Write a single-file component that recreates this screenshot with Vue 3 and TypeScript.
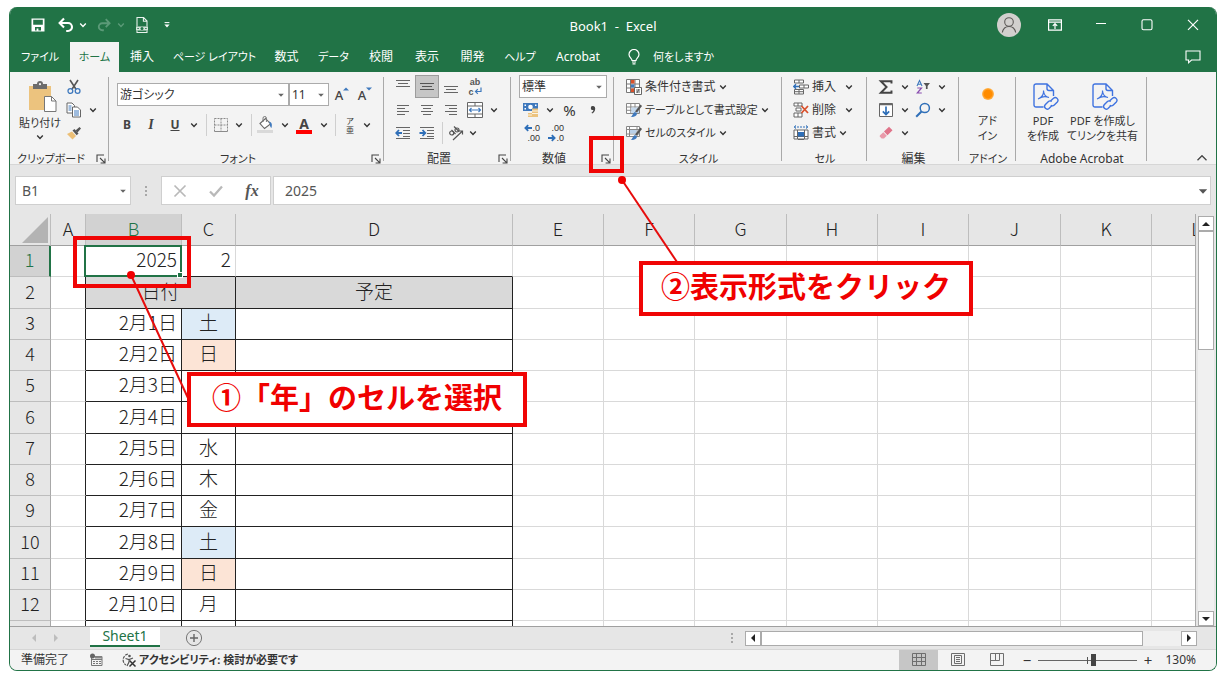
<script setup lang="ts">
import { ref } from 'vue'

interface Day {
  date: string
  dow: string
  kind?: 'sat' | 'sun'
}

const columns: string[] = ['A', 'B', 'C', 'D', 'E', 'F', 'G', 'H', 'I', 'J', 'K', 'L']
const emptyColumns = columns.slice(4)

const days: Day[] = [
  { date: '2月1日', dow: '土', kind: 'sat' },
  { date: '2月2日', dow: '日', kind: 'sun' },
  { date: '2月3日', dow: '' },
  { date: '2月4日', dow: '' },
  { date: '2月5日', dow: '水' },
  { date: '2月6日', dow: '木' },
  { date: '2月7日', dow: '金' },
  { date: '2月8日', dow: '土', kind: 'sat' },
  { date: '2月9日', dow: '日', kind: 'sun' },
  { date: '2月10日', dow: '月' },
]

const tabs: string[] = [
  'ファイル', 'ホーム', '挿入', 'ページ レイアウト', '数式', 'データ',
  '校閲', '表示', '開発', 'ヘルプ', 'Acrobat',
]
const kana = /[ァ-ヶ]/
const activeTab = ref('ホーム')

const styleCommands = [
  { icon: 'i-cond', label: '条件付き書式' },
  { icon: 'i-table', label: 'テーブルとして書式設定' },
  { icon: 'i-cellstyle', label: 'セルのスタイル' },
]
const cellCommands = [
  { icon: 'i-insert', label: '挿入', wide: true },
  { icon: 'i-delete', label: '削除', wide: true },
  { icon: 'i-format', label: '書式', wide: false },
]

const cellName = ref('B1')
const formula = ref('2025')
const zoom = ref(56)
</script>

<template>
  <svg class="sprite" aria-hidden="true">
    <symbol id="chev" viewBox="0 0 8 8"><path d="M1.2 2.6 4 5.4 6.8 2.6" fill="none" stroke="currentColor" stroke-width="1.4" /></symbol>
    <symbol id="caret" viewBox="0 0 8 8"><path d="M1.2 2.8h5.6L4 5.8z" fill="currentColor" /></symbol>
    <symbol id="launch" viewBox="0 0 10 10"><path d="M1 8V1h7M4 4l4.6 4.6M9 4.6V9H4.6" fill="none" stroke="#444" stroke-width="1.1" /></symbol>

    <symbol id="i-save" viewBox="0 0 16 16"><path fill="#fff" fill-rule="evenodd" d="M1.5 1.5h13v13h-13zM3.2 2.7v5h9.6v-5zM5 10v3.4h1.6V11.6h1.8v1.8H11V10z" /></symbol>
    <symbol id="i-undo" viewBox="0 0 16 16"><path d="M1.6 6H10a3.9 3.9 0 0 1 0 8H8.2M6 1.4 1.6 6 6 10.4" fill="none" stroke="currentColor" stroke-width="2.1" /></symbol>
    <symbol id="i-print" viewBox="0 0 16 18"><path d="M3 10.5V1.5h6.6L13 5v5.5M9.4 1.6v3.6H13M3 14.5v2h10v-2" fill="none" stroke="#e8f1ec" stroke-width="1.1" /><path d="M2 10.6h12v3.8H2z" fill="#d3e4da" /><circle cx="8" cy="12.5" r="1.5" fill="#217346" /><path d="M3.4 12h1.4v1H3.4zM11.2 12h1.4v1h-1.4z" fill="#217346" /></symbol>
    <symbol id="i-more" viewBox="0 0 8 8"><path d="M1.6 1.6h4.8" stroke="#fff" /><path d="M1.4 3.6h5.2L4 6.4z" fill="#fff" /></symbol>
    <symbol id="i-user" viewBox="0 0 24 24"><circle cx="12" cy="12" r="12" fill="#d2d0ce" /><circle cx="12" cy="9" r="4.3" fill="none" stroke="#5d5a58" stroke-width="1.1" /><path d="M5.3 19.5c.8-4 3.4-6 6.7-6s5.9 2 6.7 6" fill="none" stroke="#5d5a58" stroke-width="1.1" /></symbol>
    <symbol id="i-ribbon" viewBox="0 0 14 12"><path d="M.6.8h12.8v10.4H.6zM.6 3.2h12.8M7 10V5M4.8 6.8 7 4.6l2.2 2.2" fill="none" stroke="#fff" stroke-width="1.2" /></symbol>
    <symbol id="i-min" viewBox="0 0 12 12"><path d="M1 4.5h10" stroke="#fff" stroke-width="1.2" /></symbol>
    <symbol id="i-max" viewBox="0 0 12 12"><rect x="1" y="0.8" width="10" height="10" rx="1.5" fill="none" stroke="#fff" stroke-width="1.1" /></symbol>
    <symbol id="i-close" viewBox="0 0 12 12"><path d="m1 .8 10 10M11 .8 1 10.8" stroke="#fff" stroke-width="1.2" /></symbol>
    <symbol id="i-bulb" viewBox="0 0 12 16"><path d="M4 11.500C4 9.500 1 8.600 1 5.500a5 5 0 0 1 10 0c0 3.100-3 4-3 6zM4 13h4M4.500 14.800h3" fill="none" stroke="#fff" stroke-width="1.2" /></symbol>
    <symbol id="i-comment" viewBox="0 0 16 14"><path d="M1 1h14v9H6.500L3.600 12.800V10H1z" fill="none" stroke="#fff" stroke-width="1.1" /></symbol>

    <symbol id="i-paste" viewBox="0 0 28 32"><path d="M0 5h22v24H0z" fill="#ecc37e" /><path d="M4 3h4a3 3 0 0 1 6 0h4v5H4z" fill="#6c6c6c" /><circle cx="11" cy="3.2" r="1.1" fill="#f3f3f3" /><path d="M15.500 15.500h7l4.500 4.500v10.500H15.500z" fill="#fff" stroke="#777" /><path d="M22.500 15.500V20H27" fill="none" stroke="#777" /></symbol>
    <symbol id="i-cut" viewBox="0 0 14 16"><path d="M3 1 9.200 10.500M11 1 4.800 10.500" stroke="#555" stroke-width="1.6" /><circle cx="3.4" cy="12" r="2.4" fill="none" stroke="#3f79bd" stroke-width="1.3" /><circle cx="10.6" cy="12" r="2.4" fill="none" stroke="#3f79bd" stroke-width="1.3" /></symbol>
    <symbol id="i-copy" viewBox="0 0 16 16"><path d="M1 1h5l2.500 2.500V11H1z" fill="#fff" stroke="#666" /><path d="M6.500 5h5L14.500 8v7h-8z" fill="#fff" stroke="#666" /><path d="M8 9h5M8 11h5M8 13h5M2.500 4h3M2.500 6h3M2.500 8h3" stroke="#3f79bd" /></symbol>
    <symbol id="i-brush" viewBox="0 0 16 14"><path d="M1 8l5-2.500 4 4.500L6.500 13.500z" fill="#ecbf76" /><path d="m6.500 4.500 2-1.500 4 4.500-1.800 1.700z" fill="#555" /><path d="m9.500 4.500 4-3.500 1.500 1.500-3.500 4z" fill="#555" /></symbol>
    <symbol id="i-borders" viewBox="0 0 14 14"><path d="M.5.5h13v13H.5zM7 .5v13M.5 7h13" fill="none" stroke="#8a8a8a" stroke-dasharray="2 1" /><path d="M.5 13.500h13" stroke="#8a8a8a" /></symbol>
    <symbol id="i-fill" viewBox="0 0 18 18"><path d="M0 14h16v3H0z" fill="#d9d9d9" /><path d="m3 7.500 5.500-5 5 5.500-6 4.500z" fill="#fff" stroke="#666" stroke-width="1.1" /><path d="M6 6V2.200a1.700 1.700 0 0 1 3.400 0V6" fill="none" stroke="#777" /><path d="M12 5.500c2.500.5 3.500 2.500 2.500 6.500-1.300-1-1.800-2.300-1.500-4z" fill="#3f79bd" /></symbol>
    <symbol id="i-valign-t" viewBox="0 0 16 16"><path d="M1 1.500h14M3 4.500h10M1 7.500h14" stroke="#666" /></symbol>
    <symbol id="i-valign-m" viewBox="0 0 16 16"><path d="M1 4.500h14M3 7.500h10M1 10.500h14" stroke="#555" /></symbol>
    <symbol id="i-valign-b" viewBox="0 0 16 16"><path d="M1 7.500h14M3 10.500h10M1 13.500h14" stroke="#666" /></symbol>
    <symbol id="i-left" viewBox="0 0 16 16"><path d="M2 3.500h12M2 6.500h8M2 9.500h12M2 12.500h8" stroke="#666" /></symbol>
    <symbol id="i-center" viewBox="0 0 16 16"><path d="M2 3.500h12M4 6.500h8M2 9.500h12M4 12.500h8" stroke="#666" /></symbol>
    <symbol id="i-right" viewBox="0 0 16 16"><path d="M2 3.500h12M6 6.500h8M2 9.500h12M6 12.500h8" stroke="#666" /></symbol>
    <symbol id="i-wrap" viewBox="0 0 8 8"><path d="M7 .5V4.500H1.500M3.800 2.200 1.500 4.500l2.300 2.300" fill="none" stroke="#3f79bd" stroke-width="1.2" /></symbol>
    <symbol id="i-merge" viewBox="0 0 16 16"><path d="M.5.5h15v15H.5zM.5 4h15M.5 12h15M8 .5V4M8 12v3.500" fill="#fff" stroke="#666" /><path d="M2.500 8h11M4.500 6 2.500 8l2 2M11.500 6l2 2-2 2" fill="none" stroke="#3f79bd" stroke-width="1.2" /></symbol>
    <symbol id="i-outdent" viewBox="0 0 16 16"><path d="M1 2.500h14M8 5.500h7M8 8.500h7M8 11.500h7M1 13.500h14" stroke="#666" /><path d="M7 8H1.500M4 5 1.200 8 4 11" fill="none" stroke="#2f6fb8" stroke-width="1.8" /></symbol>
    <symbol id="i-indent" viewBox="0 0 16 16"><path d="M1 2.500h14M8 5.500h7M8 8.500h7M8 11.500h7M1 13.500h14" stroke="#666" /><path d="M.5 8H6M3.500 5 6.300 8l-2.800 3" fill="none" stroke="#2f6fb8" stroke-width="1.8" /></symbol>
    <symbol id="i-orient" viewBox="0 0 16 16"><g fill="none" stroke="#555" stroke-width="1.2"><circle cx="3.7" cy="8" r="2" /><path d="m3.500 5 4 4M6 1.500l5 5" /><circle cx="9" cy="5" r="2" /><path d="M5 15 14.500 6M11 6h3.500v3.500" /></g></symbol>
    <symbol id="i-money" viewBox="0 0 16 16"><path d="M0 1h15v8H0z" fill="#3f79bd" /><circle cx="7.5" cy="5" r="2.3" fill="#fff" /><path d="M1.500 2.500H3v1.500H1.500zM12 2.500h1.500V4H12zM1.500 6H3v1.500H1.500z" fill="#fff" /><path d="M9 6.500h6v8.500H9zM5 11h5v4H5z" fill="#ecc37e" /><path d="M9 9h6M9 11.500h6M5 13h4" stroke="#fff" stroke-width=".8" /></symbol>
    <symbol id="i-comma" viewBox="0 0 8 12"><path d="M4 2a2 2 0 1 0 .4 3.900C4.200 7.200 3.500 8 2.500 8.600l.6.900C5 8.600 6.200 7 6.200 4.500 6.200 3 5.300 2 4 2z" fill="#444" /></symbol>
    <symbol id="i-arrow-l" viewBox="0 0 8 8"><path d="M8 4H2M4.200 1.200 1.400 4l2.800 2.800" fill="none" stroke="#2f6fb8" stroke-width="1.8" /></symbol>
    <symbol id="i-arrow-r" viewBox="0 0 8 8"><path d="M0 4h6M3.800 1.200 6.600 4 3.800 6.800" fill="none" stroke="#2f6fb8" stroke-width="1.8" /></symbol>
    <symbol id="i-cond" viewBox="0 0 16 16"><path d="M.5.5h13v13H.5zM.5 5h13M.5 9h13M4.500.5v13M9 .5v13" fill="#fff" stroke="#777" /><path d="M5 1h3.500v3.500H5zM5 9.500h3.500V13H5z" fill="#d9512c" /><path d="M5 5.500h3.500v3H5z" fill="#3f79bd" /><path d="M8.500 8.500h7v7h-7z" fill="#fff" stroke="#666" /><path d="M10 11h4M10 13h4M13 10l-2 4" stroke="#555" stroke-width=".9" /></symbol>
    <symbol id="i-table" viewBox="0 0 16 16"><path d="M.5 1.500h13v10H.5zM.5 5h13M.5 8.300h13M4.800 1.500v10M9 1.500v10" fill="#fff" stroke="#888" /><path d="M5.300 5.500H13V11H5.300z" fill="#c5d9ee" /><path d="m9 9.500 5.500-7L16 4l-5 6.500z" fill="#555" /><path d="M4.500 15c2-.5 2-4 4.500-5l2 1.500c0 2.500-3 4-6.500 3.500z" fill="#3f79bd" /></symbol>
    <symbol id="i-cellstyle" viewBox="0 0 16 16"><path d="M.5 1.500h13v10H.5zM.5 4.500h13M.5 9h13M3.500 1.500v10M11 1.500v10" fill="#fff" stroke="#888" /><path d="M4 5h6.500v3.500H4z" fill="#b9d0e8" /><path d="m9 9.500 5.500-7L16 4l-5 6.500z" fill="#555" /><path d="M4.500 15c2-.5 2-4 4.500-5l2 1.500c0 2.500-3 4-6.500 3.500z" fill="#3f79bd" /></symbol>
    <symbol id="i-insert" viewBox="0 0 16 16"><path d="M1.500 1v3h9V1zM6 1v3M1.500 10.500v4.500h9v-4.500zM6 10.500V15M1.500 12.700h9" fill="#fff" stroke="#666" /><path d="M6.500 6h9v3h-9zM11 6v3" fill="#fff" stroke="#666" /><path d="M6 7.500H1M3 5.300.8 7.500 3 9.700" fill="none" stroke="#2f6fb8" stroke-width="1.4" /></symbol>
    <symbol id="i-delete" viewBox="0 0 16 16"><path d="M1 1v3h8V1zM5 1v3M1 11v4h8v-4zM5 11v4M3 6h5v3H3z" fill="#fff" stroke="#666" /><path d="m8.500 4 6.500 7M15 4l-6.500 7" stroke="#d9512c" stroke-width="1.8" /></symbol>
    <symbol id="i-format" viewBox="0 0 16 16"><path d="M1 2h14M3 .5 1 2l2 1.500M13 .5 15 2l-2 1.500" fill="none" stroke="#2f6fb8" stroke-dasharray="2 1" /><path d="M1 5h14v9H1zM4.500 5v9M11.500 5v9M1 11.500h14" fill="#fff" stroke="#666" /><path d="M5 7h6v4.500H5z" fill="#2f6fb8" /><path d="M5 14.500h6" stroke="#666" /></symbol>
    <symbol id="i-sum" viewBox="0 0 14 14"><path d="M11.800 4V2H2.500l5 5-5 5h9.300v-2" fill="none" stroke="#444" stroke-width="1.7" /></symbol>
    <symbol id="i-sort" viewBox="0 0 16 16"><path d="M2 7l2.500-5.500L7 7M3 5.300h3" fill="none" stroke="#3f79bd" stroke-width="1.1" /><path d="M2.300 9h4.200l-4.200 5h4.500" fill="none" stroke="#8a4fb0" stroke-width="1.2" /><path d="M8.500 4H15l-2.400 3v3h-1.700V7z" fill="#555" /></symbol>
    <symbol id="i-filldown" viewBox="0 0 14 14"><path d="M.5.5h13v13H.5z" fill="#fff" stroke="#666" /><path d="M.5 1.500h13" stroke="#666" stroke-width="1.5" /><path d="M7 3.500v8M3.800 8.300 7 11.500l3.200-3.200" fill="none" stroke="#2f6fb8" stroke-width="1.7" /></symbol>
    <symbol id="i-find" viewBox="0 0 16 16"><circle cx="9.800" cy="6" r="4.600" fill="none" stroke="#2f6fb8" stroke-width="1.5" /><path d="M6.500 9.500 1.200 14.800" stroke="#2f6fb8" stroke-width="2" /></symbol>
    <symbol id="i-erase" viewBox="0 0 14 14"><path d="M5 5.500 10 .8l3.500 3.500-5 5z" fill="#e0748a" /><path d="M4.300 6.200 7.800 9.700 5 12.500H2.600L.8 10.500v-1z" fill="#e99aaa" /></symbol>
    <symbol id="i-pdf" viewBox="0 0 26 28"><g fill="none" stroke="#3f73e0" stroke-width="1.4"><path d="M10.500 24H3a2 2 0 0 1-2-2V3a2 2 0 0 1 2-2h11l6.500 6.500V13M14 1v4.500a2 2 0 0 0 2 2h4.500" /><path d="M5 16c4-1.600 5.800-5 5.500-8.500M10.500 7.500c.3 4 2.500 6.500 5.500 7M6 15.500c3-2 6.500-2.500 10-1" stroke-width="1.1" /><path d="m17.500 18 3-2.800a2.700 2.700 0 0 1 3.800 3.800l-3 3a2.700 2.700 0 0 1-3.500.2" /><path d="m19 22.500-3 3a2.700 2.700 0 0 1-3.800-3.800l3-3a2.700 2.700 0 0 1 3.500-.2" /></g></symbol>
    <symbol id="i-collapse" viewBox="0 0 12 8"><path d="M1.500 6.200 6 1.700l4.500 4.500" fill="none" stroke="#444" stroke-width="1.3" /></symbol>
    <symbol id="i-dots" viewBox="0 0 4 12"><path d="M1 1h2v2H1zM1 5h2v2H1zM1 9h2v2H1z" fill="#a8a8a8" /></symbol>
    <symbol id="i-cancel" viewBox="0 0 14 14"><path d="m1.500 1.500 11 11M12.500 1.500l-11 11" stroke="#b9b9b9" stroke-width="1.700" /></symbol>
    <symbol id="i-enter" viewBox="0 0 14 14"><path d="m1 7.500 4 4 8-9" fill="none" stroke="#b9b9b9" stroke-width="2.300" /></symbol>
    <symbol id="i-corner" viewBox="0 0 26 26"><path d="M26 0v26H0z" fill="#b3b3b3" /></symbol>
    <symbol id="i-plus" viewBox="0 0 18 18"><circle cx="9" cy="9" r="7.600" fill="none" stroke="#777" /><path d="M9 5v8M5 9h8" stroke="#666" stroke-width="1.400" /></symbol>
    <symbol id="tri-l" viewBox="0 0 8 8"><path d="M6 0v8L2 4z" fill="currentColor" /></symbol>
    <symbol id="tri-r" viewBox="0 0 8 8"><path d="M2 0v8l4-4z" fill="currentColor" /></symbol>
    <symbol id="tri-u" viewBox="0 0 8 8"><path d="M0 6h8L4 2z" fill="currentColor" /></symbol>
    <symbol id="tri-d" viewBox="0 0 8 8"><path d="M0 2h8L4 6z" fill="currentColor" /></symbol>
    <symbol id="i-macro" viewBox="0 0 14 14"><path d="M2.500 3.500h10.500v9H2.500zM2.500 6.500H13" fill="none" stroke="#777" /><path d="M4 8.500h8M4 10.500h8" stroke="#777" stroke-dasharray="2 1" /><circle cx="3.500" cy="3" r="2.500" fill="#666" /><path d="M6 3.500h7v2H6z" fill="#888" /></symbol>
    <symbol id="i-access" viewBox="0 0 16 16"><path d="M7 2a6 6 0 0 0-2 11" fill="none" stroke="#555" stroke-width="1.200" stroke-dasharray="3 1" /><circle cx="8.500" cy="4" r="1.300" fill="#555" /><path d="M4.500 6.500 8 7.500l4-1.500M8 7.500V10l-2 4" fill="none" stroke="#555" stroke-width="1.200" /><path d="m8.500 8.500 6 6M14.500 8.500l-6 6" stroke="#333" stroke-width="1.500" /></symbol>
    <symbol id="i-normal" viewBox="0 0 14 14"><path d="M.5.5h13v12H.5zM.5 4.500h13M.5 8.500h13M4.500.5v12M9.500.5v12" fill="none" stroke="#6e6e6e" /></symbol>
    <symbol id="i-page" viewBox="0 0 14 14"><path d="M.5.5h13v12H.5zM3.500 2.500h7v8h-7zM5 4.500h4M5 6.500h4M5 8.500h4" fill="none" stroke="#6e6e6e" /></symbol>
    <symbol id="i-break" viewBox="0 0 14 14"><path d="M.5.5h13v12H.5zM5.500.5v7M9.500.5v7M.5 7.500h9" fill="none" stroke="#6e6e6e" /></symbol>
  </svg>

  <div class="window">
    <header class="titlebar">
      <div class="quick">
        <button aria-label="上書き保存"><svg class="s16"><use href="#i-save" /></svg></button>
        <button class="q-undo" aria-label="元に戻す"><svg class="s16"><use href="#i-undo" /></svg></button>
        <button class="q-list" aria-label="元に戻す一覧"><svg class="s8"><use href="#chev" /></svg></button>
        <button class="q-next dim" aria-label="やり直し"><svg class="s14 flip"><use href="#i-undo" /></svg></button>
        <button class="q-list dim" aria-label="やり直し一覧"><svg class="s8"><use href="#chev" /></svg></button>
        <button class="q-next" aria-label="印刷プレビュー"><svg class="s18"><use href="#i-print" /></svg></button>
        <button class="q-undo q-list" aria-label="カスタマイズ"><svg class="s8"><use href="#i-more" /></svg></button>
      </div>
      <h1>Book1&nbsp; -&nbsp; Excel</h1>
      <div class="winbtns">
        <button aria-label="アカウント"><svg class="s24"><use href="#i-user" /></svg></button>
        <button aria-label="リボンの表示"><svg class="s14"><use href="#i-ribbon" /></svg></button>
        <button aria-label="最小化"><svg class="s12"><use href="#i-min" /></svg></button>
        <button aria-label="最大化"><svg class="s12"><use href="#i-max" /></svg></button>
        <button aria-label="閉じる"><svg class="s12"><use href="#i-close" /></svg></button>
      </div>
    </header>

    <nav class="tabs">
      <button v-for="t in tabs" :key="t" :class="{ active: t === activeTab, small: kana.test(t) }" @click="activeTab = t">{{ t }}</button>
      <button class="tell small"><svg class="bulb"><use href="#i-bulb" /></svg>何をしますか</button>
      <button class="comment" aria-label="コメント"><svg class="s16"><use href="#i-comment" /></svg></button>
    </nav>

    <div class="ribbon">
      <section class="group g-clip">
        <div class="body">
          <button class="paste small"><svg class="pasteicon"><use href="#i-paste" /></svg>貼り付け<svg class="s8"><use href="#chev" /></svg></button>
          <div class="clipcol">
            <button aria-label="切り取り"><svg class="s16"><use href="#i-cut" /></svg></button>
            <button aria-label="コピー"><svg class="s16"><use href="#i-copy" /></svg></button>
            <button aria-label="コピーの一覧"><svg class="s8"><use href="#chev" /></svg></button>
            <button aria-label="書式のコピー"><svg class="s16"><use href="#i-brush" /></svg></button>
          </div>
        </div>
        <div class="label small"><span>クリップボード</span><button aria-label="クリップボードの設定"><svg class="s10"><use href="#launch" /></svg></button></div>
      </section>

      <section class="group g-font">
        <div class="body stack">
          <div class="fontrow">
            <div class="sel"><select aria-label="フォント名"><option>游ゴシック</option></select><svg class="s8"><use href="#caret" /></svg></div>
            <div class="sel"><select aria-label="フォント サイズ"><option>11</option></select><svg class="s8"><use href="#caret" /></svg></div>
            <button class="grow" aria-label="フォント サイズの拡大">A<svg><use href="#tri-u" /></svg></button>
            <button class="grow" aria-label="フォント サイズの縮小">A<svg><use href="#tri-d" /></svg></button>
          </div>
          <div class="fmtrow">
            <button class="b">B</button>
            <button class="b it">I</button>
            <button class="b un">U</button>
            <button aria-label="下線の一覧"><svg class="s8"><use href="#chev" /></svg></button>
            <i class="sep"></i>
            <button aria-label="罫線"><svg class="s14"><use href="#i-borders" /></svg></button>
            <button aria-label="罫線の一覧"><svg class="s8"><use href="#chev" /></svg></button>
            <i class="sep"></i>
            <button aria-label="塗りつぶしの色"><svg class="s18"><use href="#i-fill" /></svg></button>
            <button aria-label="塗りつぶしの一覧"><svg class="s8"><use href="#chev" /></svg></button>
            <button class="fontcolor" aria-label="フォントの色"><span>A</span></button>
            <button aria-label="フォントの色の一覧"><svg class="s8"><use href="#chev" /></svg></button>
            <i class="sep"></i>
            <button class="ruby"><span>ア</span><span>亜</span></button>
            <button aria-label="ふりがなの一覧"><svg class="s8"><use href="#chev" /></svg></button>
          </div>
        </div>
        <div class="label small"><span>フォント</span><button aria-label="フォントの設定"><svg class="s10"><use href="#launch" /></svg></button></div>
      </section>

      <section class="group g-align">
        <div class="body stack">
          <div class="row">
            <button aria-label="上揃え"><svg class="s16"><use href="#i-valign-t" /></svg></button>
            <button class="on" aria-label="上下中央揃え"><svg class="s16"><use href="#i-valign-m" /></svg></button>
            <button aria-label="下揃え"><svg class="s16"><use href="#i-valign-b" /></svg></button>
            <button class="wrap" aria-label="折り返し"><span>ab</span><span>c<svg class="s8"><use href="#i-wrap" /></svg></span></button>
          </div>
          <div class="row">
            <button aria-label="左揃え"><svg class="s16"><use href="#i-left" /></svg></button>
            <button aria-label="中央揃え"><svg class="s16"><use href="#i-center" /></svg></button>
            <button aria-label="右揃え"><svg class="s16"><use href="#i-right" /></svg></button>
            <button aria-label="セルの結合"><svg class="s16"><use href="#i-merge" /></svg></button>
            <button class="cv" aria-label="結合の一覧"><svg class="s8"><use href="#chev" /></svg></button>
          </div>
          <div class="row">
            <button aria-label="インデントを減らす"><svg class="s16"><use href="#i-outdent" /></svg></button>
            <button aria-label="インデントを増やす"><svg class="s16"><use href="#i-indent" /></svg></button>
            <i class="sep"></i>
            <button class="orient" aria-label="方向"><svg class="s16"><use href="#i-orient" /></svg></button>
            <button class="cv" aria-label="方向の一覧"><svg class="s8"><use href="#chev" /></svg></button>
          </div>
        </div>
        <div class="label"><span>配置</span><button aria-label="配置の設定"><svg class="s10"><use href="#launch" /></svg></button></div>
      </section>

      <section class="group g-num">
        <div class="body stack">
          <div class="sel"><select aria-label="表示形式"><option>標準</option></select><svg class="s8"><use href="#caret" /></svg></div>
          <div class="row">
            <button aria-label="通貨表示形式"><svg class="s16"><use href="#i-money" /></svg></button>
            <button class="cv" aria-label="通貨の一覧"><svg class="s8"><use href="#chev" /></svg></button>
            <button class="pct">%</button>
            <button class="comma" aria-label="桁区切りスタイル"><svg><use href="#i-comma" /></svg></button>
          </div>
          <div class="row">
            <button class="dec" aria-label="小数点以下の表示桁数を増やす"><span><svg class="s8"><use href="#i-arrow-l" /></svg>.0</span><span>.00</span></button>
            <button class="dec" aria-label="小数点以下の表示桁数を減らす"><span>.00</span><span><svg class="s8"><use href="#i-arrow-r" /></svg>.0</span></button>
          </div>
        </div>
        <div class="label"><span>数値</span><button aria-label="表示形式の設定"><svg class="s10"><use href="#launch" /></svg></button></div>
      </section>

      <section class="group g-style">
        <div class="body stack">
          <button v-for="c in styleCommands" :key="c.label" class="cmd" :class="{ small: kana.test(c.label) }"><svg class="s16"><use :href="'#' + c.icon" /></svg>{{ c.label }}<svg class="s8"><use href="#chev" /></svg></button>
        </div>
        <div class="label small"><span>スタイル</span></div>
      </section>

      <section class="group g-cell">
        <div class="body stack">
          <button v-for="c in cellCommands" :key="c.label" class="cmd" :class="{ wide: c.wide }"><svg class="s16"><use :href="'#' + c.icon" /></svg>{{ c.label }}<svg class="s8"><use href="#chev" /></svg></button>
        </div>
        <div class="label small"><span>セル</span></div>
      </section>

      <section class="group g-edit">
        <div class="body stack">
          <div class="row">
            <button aria-label="オート SUM"><svg class="s16"><use href="#i-sum" /></svg></button>
            <button class="cv" aria-label="SUM の一覧"><svg class="s8"><use href="#chev" /></svg></button>
            <button aria-label="並べ替えとフィルター"><svg class="s16"><use href="#i-sort" /></svg></button>
            <button class="cv" aria-label="並べ替えの一覧"><svg class="s8"><use href="#chev" /></svg></button>
          </div>
          <div class="row">
            <button aria-label="フィル"><svg class="s14"><use href="#i-filldown" /></svg></button>
            <button class="cv" aria-label="フィルの一覧"><svg class="s8"><use href="#chev" /></svg></button>
            <button aria-label="検索と選択"><svg class="s16"><use href="#i-find" /></svg></button>
            <button class="cv" aria-label="検索の一覧"><svg class="s8"><use href="#chev" /></svg></button>
          </div>
          <div class="row">
            <button aria-label="クリア"><svg class="s14"><use href="#i-erase" /></svg></button>
            <button class="cv" aria-label="クリアの一覧"><svg class="s8"><use href="#chev" /></svg></button>
          </div>
        </div>
        <div class="label"><span>編集</span></div>
      </section>

      <section class="group g-addin">
        <div class="body">
          <button class="big"><span class="art"><i class="orb"></i></span><span>アド</span><span>イン</span></button>
        </div>
        <div class="label small"><span>アドイン</span></div>
      </section>

      <section class="group g-pdf">
        <div class="body">
          <button class="big"><span class="art"><svg class="pdf"><use href="#i-pdf" /></svg></span><span>PDF</span><span>を作成</span></button>
          <button class="big"><span class="art"><svg class="pdf"><use href="#i-pdf" /></svg></span><span>PDF を作成し</span><span>てリンクを共有</span></button>
        </div>
        <div class="label"><span>Adobe Acrobat</span></div>
      </section>

      <button class="collapse" aria-label="リボンを折りたたむ"><svg class="s12"><use href="#i-collapse" /></svg></button>
    </div>

    <div class="formulabar">
      <div class="namebox"><input v-model="cellName" aria-label="名前ボックス"><svg class="s8"><use href="#caret" /></svg></div>
      <svg class="dots"><use href="#i-dots" /></svg>
      <div class="fx">
        <button aria-label="キャンセル"><svg class="s14"><use href="#i-cancel" /></svg></button>
        <button aria-label="入力"><svg class="s14"><use href="#i-enter" /></svg></button>
        <button class="fn">fx</button>
      </div>
      <div class="formula"><input v-model="formula" aria-label="数式バー"><svg class="s12"><use href="#caret" /></svg></div>
    </div>

    <div class="sheetarea">
      <div class="sheet">
        <table>
          <colgroup>
            <col class="c-head"><col class="c-a"><col class="c-b"><col class="c-c"><col class="c-d">
            <col class="c-n"><col class="c-n"><col class="c-w"><col class="c-n"><col class="c-n"><col class="c-w"><col class="c-n"><col class="c-l">
          </colgroup>
          <thead>
            <tr>
              <th class="corner"><svg class="cornericon"><use href="#i-corner" /></svg></th>
              <th v-for="c in columns" :key="c" scope="col" :class="{ picked: c === 'B' }">{{ c }}</th>
            </tr>
          </thead>
          <tbody>
            <tr>
              <th scope="row" class="picked">1</th>
              <td></td>
              <td class="num active">2025<span class="cursor"></span></td>
              <td class="num kb">2</td>
              <td class="kb"></td>
              <td v-for="c in emptyColumns" :key="c"></td>
            </tr>
            <tr>
              <th scope="row">2</th>
              <td class="kr"></td>
              <td colspan="2" class="k head">日付</td>
              <td class="k head">予定</td>
              <td v-for="c in emptyColumns" :key="c"></td>
            </tr>
            <tr v-for="(d, i) in days" :key="d.date">
              <th scope="row">{{ i + 3 }}</th>
              <td class="kr"></td>
              <td class="k num">{{ d.date }}</td>
              <td class="k mid" :class="d.kind">{{ d.dow }}</td>
              <td class="k"></td>
              <td v-for="c in emptyColumns" :key="c"></td>
            </tr>
            <tr>
              <th></th>
              <td class="kr"></td>
              <td class="k"></td>
              <td class="k"></td>
              <td class="k"></td>
              <td v-for="c in emptyColumns" :key="c"></td>
            </tr>
          </tbody>
        </table>
      </div>
      <div class="vscroll">
        <button aria-label="上へ"><svg class="s8"><use href="#tri-u" /></svg></button>
        <div class="thumb"></div>
        <button class="end" aria-label="下へ"><svg class="s8"><use href="#tri-d" /></svg></button>
      </div>
    </div>

    <div class="sheetbar">
      <button class="nav" aria-label="前のシート"><svg class="s8"><use href="#tri-l" /></svg></button>
      <button class="nav" aria-label="次のシート"><svg class="s8"><use href="#tri-r" /></svg></button>
      <button class="sheettab">Sheet1</button>
      <button class="add" aria-label="新しいシート"><svg class="s18"><use href="#i-plus" /></svg></button>
      <div class="hscroll">
        <svg class="dots"><use href="#i-dots" /></svg>
        <button aria-label="左へ"><svg class="s8"><use href="#tri-l" /></svg></button>
        <div class="track"><div class="thumb"></div></div>
        <button aria-label="右へ"><svg class="s8"><use href="#tri-r" /></svg></button>
      </div>
    </div>

    <footer class="status">
      <span>準備完了</span>
      <svg class="s14 macro"><use href="#i-macro" /></svg>
      <button class="access small"><svg class="s16"><use href="#i-access" /></svg>アクセシビリティ: 検討が必要です</button>
      <div class="views">
        <button class="on" aria-label="標準"><svg class="s14"><use href="#i-normal" /></svg></button>
        <button aria-label="ページ レイアウト"><svg class="s14"><use href="#i-page" /></svg></button>
        <button aria-label="改ページ プレビュー"><svg class="s14"><use href="#i-break" /></svg></button>
      </div>
      <button class="step" aria-label="縮小">−</button>
      <input v-model="zoom" type="range" min="0" max="100" aria-label="ズーム">
      <button class="step" aria-label="拡大">+</button>
      <span class="percent">130%</span>
    </footer>
  </div>

  <svg class="leaders" aria-hidden="true">
    <g stroke="#e60c0c" stroke-width="2"><path d="M131 275 188 398" /><path d="M622 180 677 262" /></g>
    <g fill="#f00000"><circle cx="131" cy="275" r="4" /><circle cx="622" cy="180" r="4" /></g>
  </svg>
  <div class="mark mark-cell"></div>
  <div class="mark mark-launch"></div>
  <div class="callout callout-1">①「年」のセルを選択</div>
  <div class="callout callout-2">②表示形式をクリック</div>
</template>

<style>
body {
  margin: 0;
  background: #fff;
}
</style>

<style scoped>
.sprite {
  display: none;
}
svg {
  display: block;
  flex: none;
}
.s8 { width: 8px; height: 8px; }
.s10 { width: 10px; height: 10px; }
.s12 { width: 12px; height: 12px; }
.s14 { width: 14px; height: 14px; }
.s16 { width: 16px; height: 16px; }
.s18 { width: 18px; height: 18px; }
.s24 { width: 24px; height: 24px; }
.flip { transform: scaleX(-1); }

button,
input,
select {
  font: inherit;
  font-feature-settings: inherit;
  color: inherit;
  background: none;
  border: 0;
  padding: 0;
  margin: 0;
  min-width: 0;
  border-radius: 0;
}
button {
  display: flex;
  align-items: center;
  justify-content: center;
}

.window {
  box-sizing: border-box;
  height: calc(100vh - 16px);
  min-height: 400px;
  margin: 7px 9px 9px;
  border: 1px solid #217346;
  border-top: 0;
  border-radius: 8px;
  overflow: hidden;
  display: flex;
  flex-direction: column;
  background: #e6e6e6;
  color: #333;
  font: 12px/16px "Noto Sans", "Noto Sans CJK JP", sans-serif;
  font-feature-settings: "palt";
}
.small {
  font-size: 11px;
}

/* title bar and tabs */
.titlebar {
  display: grid;
  grid-template-columns: 1fr auto 1fr;
  align-items: center;
  height: 35px;
  flex: none;
  background: #217346;
  color: #fff;
}
.titlebar h1 {
  margin: 2px 0 0;
  font-size: 13px;
  font-weight: 400;
}
.quick {
  display: flex;
  padding-left: 18px;
}
.quick button {
  width: 20px;
}
.quick .q-undo {
  margin-left: 8px;
}
.quick .q-next {
  margin-left: 5px;
}
.quick .q-list {
  width: 13px;
}
.dim {
  color: #5b9a78;
}
.winbtns {
  display: grid;
  grid-template-columns: repeat(5, 46px);
  justify-content: end;
}
.tabs {
  display: grid;
  grid-template-columns: 60px 49px 46px 99px 45px 49px 46px 46px 45px 50px 66px auto 1fr;
  height: 30px;
  flex: none;
  background: #217346;
  color: #fff;
}
.tabs button {
  white-space: nowrap;
}
.tabs .active {
  background: #f3f3f3;
  color: #217346;
}
.tabs .tell {
  padding-left: 17px;
  gap: 13px;
}
.bulb {
  width: 12px;
  height: 16px;
}
.tabs .comment {
  justify-self: end;
  padding-right: 15px;
}

/* ribbon */
.ribbon {
  display: grid;
  grid-template-columns: 99px 275px 127px 103px 168px 85px 92px 57px 131px 1fr;
  flex: none;
  height: 93px;
  background: #f3f3f3;
  border-bottom: 1px solid #d6d6d6;
  box-sizing: border-box;
}
.group {
  display: flex;
  flex-direction: column;
  justify-content: space-between;
  padding: 3px 0 0;
  background: linear-gradient(#a9a9a9, #a9a9a9) right 5px / 1px 84px no-repeat;
}
.body {
  display: flex;
}
.stack {
  flex-direction: column;
}
.label {
  display: grid;
  grid-template-columns: 1fr auto;
  align-items: center;
  padding: 0 3px 0 4px;
  height: 13px;
}
.label span {
  text-align: center;
  white-space: nowrap;
}
.label button {
  padding-left: 8px;
}
.row {
  display: flex;
  height: 23px;
}
.row button {
  width: 24px;
}
.row .cv {
  width: 13px;
}
.sep {
  width: 1px;
  height: 22px;
  background: #cfcfcf;
  justify-self: center;
  align-self: center;
}
.paste {
  width: 42px;
  margin-left: 9px;
  padding-top: 3px;
  flex-direction: column;
  gap: 2px;
  white-space: nowrap;
}
.pasteicon {
  width: 28px;
  height: 32px;
  margin-left: 6px;
}
.clipcol {
  display: grid;
  grid-template: repeat(3, 23px) / 24px 13px;
  margin-left: 1px;
}
.clipcol button:first-child {
  grid-column: 1 / 3;
  margin-right: 13px;
}
.sel {
  display: grid;
  align-items: center;
  background: #fff;
  border: 1px solid #ababab;
}
.sel > * {
  grid-area: 1 / 1;
}
.sel svg,
.namebox svg {
  justify-self: end;
  margin-right: 3px;
  pointer-events: none;
  color: #666;
}
.sel select {
  appearance: none;
  height: 21px;
  padding-left: 2px;
}
.fontrow {
  display: grid;
  grid-template-columns: 172px 40px 26px 20px;
  padding: 8px 0 0 8px;
}
.grow {
  font-size: 13px;
  font-weight: 500;
  color: #444;
}
.grow svg {
  width: 6px;
  height: 6px;
  margin-bottom: 12px;
  color: #3f79bd;
}
.fmtrow {
  display: grid;
  grid-template-columns: 24px 24px 24px 14px 11px 18px 18px 6px 24px 13px 26px 13px 10px 20px 14px;
  height: 24px;
  padding: 7px 0 0 6px;
}
.b {
  font-weight: 700;
  color: #444;
}
.it {
  font-family: "Liberation Serif", serif;
  font-size: 14px;
  font-style: italic;
}
.un {
  text-decoration: underline;
}
.fontcolor span {
  width: 16px;
  border-bottom: 4px solid #f00;
  font: 700 14px/13px "Noto Sans", sans-serif;
  color: #444;
  text-align: center;
}
.ruby {
  flex-direction: column;
  font: 8px/12px "Noto Sans CJK JP", sans-serif;
}
.ruby span {
  height: 9px;
  line-height: 9px;
}
.g-align .body {
  padding-left: 7px;
}
.g-align .sep {
  margin: 0 3px;
}
.row .orient {
  width: 20px;
}
.on {
  background: #c6c6c6;
  box-shadow: inset 0 0 0 1px #9c9c9c;
}
.wrap {
  flex-direction: column;
  font: 700 9px/10px "Liberation Sans", sans-serif;
  color: #555;
}
.wrap span {
  display: flex;
}
.g-num .sel {
  margin: 0 7px 0 8px;
}
.g-num .row {
  padding-left: 8px;
}
.row .pct {
  width: 27px;
  font-size: 15px;
}
.row .comma {
  width: 20px;
}
.comma svg {
  width: 8px;
  height: 12px;
}
.dec {
  flex-direction: column;
  font: 9px/10px "Liberation Sans", sans-serif;
}
.row .dec {
  align-items: flex-end;
  padding-right: 3px;
}
.dec span {
  display: flex;
  align-items: center;
}
.cmd {
  height: 23px;
  justify-content: flex-start;
  gap: 3px;
  padding-left: 12px;
  white-space: nowrap;
}
.g-cell .cmd {
  padding-left: 11px;
}
.g-cell .wide .s8 {
  margin-left: 6px;
}
.g-edit .row {
  padding-left: 7px;
}
.g-addin .body {
  justify-content: center;
}
.g-pdf .body {
  padding-left: 5px;
}
.big {
  flex-direction: column;
  min-width: 44px;
  padding: 0 2px;
  font-size: 11px;
  line-height: 15px;
  white-space: nowrap;
}
.art {
  display: flex;
  align-items: center;
  justify-content: center;
  height: 38px;
}
.orb {
  width: 12px;
  height: 12px;
  border-radius: 50%;
  background: radial-gradient(#ff8c00 45%, #ffc067 75%);
}
.pdf {
  width: 26px;
  height: 28px;
  margin: 6px 0 0 6px;
}
.collapse {
  align-self: end;
  justify-self: end;
  padding: 0 8px 0 0;
}

/* formula bar */
.formulabar {
  display: grid;
  grid-template-columns: 116px 30px 110px 1fr;
  align-items: center;
  padding: 11px 5px 9px;
  flex: none;
  color: #555;
  font-size: 14px;
}
.formulabar > div {
  box-sizing: border-box;
  height: 29px;
  background: #fff;
  border: 1px solid #cfcfcf;
}
.namebox,
.formula {
  display: grid;
  align-items: center;
}
.namebox > *,
.formula > * {
  grid-area: 1 / 1;
}
.namebox input {
  padding-left: 6px;
}
.formulabar .formula {
  margin-left: 2px;
}
.formula input {
  padding-left: 11px;
}
.formula svg {
  justify-self: end;
  margin-right: 1px;
  color: #555;
}
.dots {
  width: 4px;
  height: 12px;
  justify-self: center;
}
.fx {
  display: grid;
  grid-template-columns: repeat(3, 1fr);
}
.fn {
  font: italic 700 16px/20px "Liberation Serif", serif;
}

/* sheet */
.sheetarea {
  display: flex;
  flex: 1;
  min-height: 0;
}
.sheet {
  flex: 1;
  min-width: 0;
  overflow: hidden;
  background: linear-gradient(#e6e6e6 32px, #fff 32px);
  border-right: 1px solid #ababab;
}
table {
  table-layout: fixed;
  width: 1231px;
  border-collapse: separate;
  border-spacing: 0;
  color: #222;
  font: 300 18px/24px "Noto Sans CJK JP", sans-serif;
  font-feature-settings: normal;
}
.c-head { width: 41px; }
.c-a { width: 35px; }
.c-b { width: 96px; }
.c-c { width: 54px; }
.c-d { width: 277px; }
.c-n { width: 91px; }
.c-w { width: 92px; }
.c-l { width: 89px; }
th,
td {
  box-sizing: border-box;
  height: 31px;
  padding: 0 0 4px;
  border: 0 solid #d9d9d9;
  border-width: 0 1px 1px 0;
  white-space: nowrap;
}
td {
  font-size: 19px;
}
tbody tr:nth-child(4n + 2) > * {
  height: 32px;
}
th {
  font-weight: 300;
  text-align: center;
  background: #e6e6e6;
  border-color: #bdbdbd;
}
thead th {
  height: 32px;
  border-bottom-color: #a0a0a0;
}
thead .corner {
  padding: 0 0 0 12px;
}
tbody th {
  border-right-color: #a8a8a8;
}
th.picked {
  background: #d2d2d2;
  color: #217346;
}
tbody th.picked {
  border-right: 2px solid #217346;
}
.cornericon {
  width: 26px;
  height: 26px;
}
.num {
  padding-right: 4px;
  text-align: right;
}
.mid,
.head {
  text-align: center;
}
.k {
  border-color: #222;
}
.kb {
  border-bottom-color: #222;
}
.kr {
  border-right-color: #222;
}
.head {
  background: #d9d9d9;
}
.sat {
  background: #ddebf7;
}
.sun {
  background: #fce4d6;
}
.active {
  position: relative;
}
.cursor {
  position: absolute;
  inset: -1px -1px -1px -2px;
  border: 2px solid #217346;
}
.cursor::after {
  content: "";
  position: absolute;
  right: -3px;
  bottom: -3px;
  width: 4px;
  height: 4px;
  background: #217346;
  border: 1px solid #fff;
}
.vscroll {
  display: flex;
  flex-direction: column;
  width: 16px;
  margin: 2px 2px 0;
  background: #f0f0f0;
  color: #222;
}
.vscroll button,
.hscroll button {
  box-sizing: border-box;
  width: 16px;
  height: 15px;
  flex: none;
  border: 1px solid #ababab;
  background: #fff;
}
.thumb {
  box-sizing: border-box;
  background: #fff;
  border: 1px solid #ababab;
}
.vscroll .thumb {
  height: 29%;
}
.vscroll .end {
  margin-top: auto;
}

/* sheet tabs */
.sheetbar {
  display: flex;
  flex: none;
  height: 23px;
  box-sizing: border-box;
  border-top: 1px solid #a0a0a0;
  color: #222;
}
.nav {
  width: 22px;
  color: #bdbdbd;
}
.nav:first-child {
  margin-left: 13px;
}
.sheettab {
  width: 70px;
  height: 20px;
  margin-left: 23px;
  background: #fff;
  border-bottom: 2px solid #217346;
  color: #217346;
  font-size: 14px;
  line-height: 16px;
}
.add {
  margin-left: 25px;
}
.hscroll {
  display: grid;
  grid-template-columns: 18px 16px 1fr 16px;
  align-items: center;
  width: 39%;
  margin-left: auto;
  padding-right: 19px;
}
.hscroll .dots {
  justify-self: start;
  margin-left: 3px;
}
.track {
  height: 15px;
  background: #f0f0f0;
}
.track .thumb {
  width: 91%;
  height: 100%;
}

/* status bar */
.status {
  display: flex;
  align-items: center;
  flex: none;
  height: 20px;
  padding: 0 20px 0 11px;
  background: #f3f3f3;
  border-top: 1px solid #d6d6d6;
}
.macro {
  margin: 0 18px 0 20px;
}
.access {
  gap: 2px;
  font-weight: 700;
}
.views {
  display: flex;
  align-self: stretch;
  margin-left: auto;
}
.views button {
  width: 39px;
}
.views .on {
  box-shadow: none;
}
.step {
  width: 22px;
  font-size: 15px;
}
.status input {
  appearance: none;
  width: 99px;
  height: 12px;
  background: linear-gradient(#555, #555) center / 1px 7px no-repeat, linear-gradient(#666, #666) center / 100% 1px no-repeat;
}
.status input::-webkit-slider-thumb {
  appearance: none;
  width: 5px;
  height: 12px;
  background: #444;
}
.percent {
  width: 34px;
  margin-left: 3px;
  text-align: right;
}

/* annotations over the window */
.leaders,
.mark,
.callout {
  position: absolute;
}
.leaders {
  top: 0;
  left: 0;
  width: 700px;
  height: 420px;
  pointer-events: none;
}
.mark {
  box-sizing: border-box;
  border: 4px solid #f00505;
  pointer-events: none;
}
.mark-cell {
  left: 73px;
  top: 236px;
  width: 118px;
  height: 52px;
}
.mark-launch {
  left: 589px;
  top: 136px;
  width: 35px;
  height: 37px;
}
.callout {
  padding: 4px 21px 11px;
  border: 4px solid #f00505;
  background: #fff;
  color: #f00000;
  font: 700 29px/32px "Noto Sans CJK JP", sans-serif;
  white-space: nowrap;
}
.callout-1 {
  left: 187px;
  top: 372px;
}
.callout-2 {
  left: 639px;
  top: 261px;
  padding-left: 18px;
  padding-right: 18px;
}
</style>
